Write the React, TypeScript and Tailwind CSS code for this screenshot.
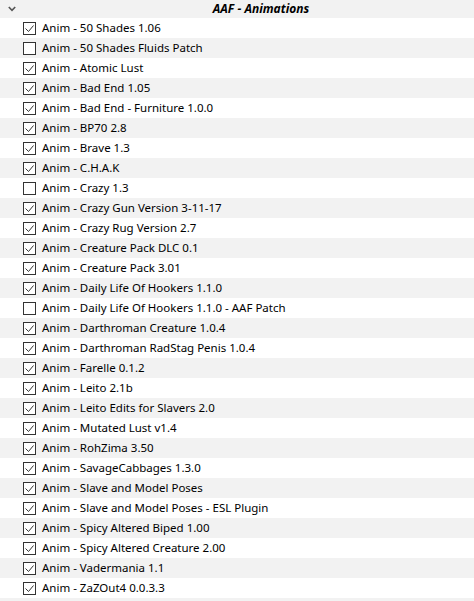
const MODS: [string, boolean][] = [
  ["Anim - 50 Shades 1.06", true],
  ["Anim - 50 Shades Fluids Patch", false],
  ["Anim - Atomic Lust", true],
  ["Anim - Bad End 1.05", true],
  ["Anim - Bad End - Furniture 1.0.0", true],
  ["Anim - BP70 2.8", true],
  ["Anim - Brave 1.3", true],
  ["Anim - C.H.A.K", true],
  ["Anim - Crazy 1.3", false],
  ["Anim - Crazy Gun Version 3-11-17", true],
  ["Anim - Crazy Rug Version 2.7", true],
  ["Anim - Creature Pack DLC 0.1", true],
  ["Anim - Creature Pack 3.01", true],
  ["Anim - Daily Life Of Hookers 1.1.0", true],
  ["Anim - Daily Life Of Hookers 1.1.0 - AAF Patch", false],
  ["Anim - Darthroman Creature 1.0.4", true],
  ["Anim - Darthroman RadStag Penis 1.0.4", true],
  ["Anim - Farelle 0.1.2", true],
  ["Anim - Leito 2.1b", true],
  ["Anim - Leito Edits for Slavers 2.0", true],
  ["Anim - Mutated Lust v1.4", true],
  ["Anim - RohZima 3.50", true],
  ["Anim - SavageCabbages 1.3.0", true],
  ["Anim - Slave and Model Poses", true],
  ["Anim - Slave and Model Poses - ESL Plugin", true],
  ["Anim - Spicy Altered Biped 1.00", true],
  ["Anim - Spicy Altered Creature 2.00", true],
  ["Anim - Vadermania 1.1", true],
  ["Anim - ZaZOut4 0.0.3.3", true],
];

function CheckBox({ checked }: { checked: boolean }) {
  return (
    <div className="w-[13px] h-[13px] border border-[#333333] bg-white flex items-center justify-center shrink-0">
      {checked && (
        <svg width="11" height="11" viewBox="0 0 11 11" fill="none" stroke="#333333" strokeWidth="1">
          <path d="M1.5 5.5 L4.5 8.5 L9.5 2.5" />
        </svg>
      )}
    </div>
  );
}

export default function App() {
  return (
    <div className="w-[474px] h-[601px] bg-[#f2f2f2] overflow-hidden font-['Noto_Sans',sans-serif] text-[11.5px] text-black">
      <div className="h-[18px] flex items-center bg-[#f2f2f2]">
        <div className="w-[50px] pl-[8px] flex items-center">
          <svg width="8" height="6" viewBox="0 0 8 6" fill="none" stroke="#555555" strokeWidth="1.6">
            <path d="M0.8 1 L4 4.4 L7.2 1" />
          </svg>
        </div>
        <div className="flex-1 text-center font-bold italic text-[12px] leading-none pr-[2px]">AAF - Animations</div>
      </div>
      {MODS.map(([name, on], i) => (
        <div
          key={name}
          className={`h-[20px] flex items-center pl-[23px] ${i % 2 === 0 ? "bg-white" : "bg-[#f2f2f2]"}`}
        >
          <CheckBox checked={on} />
          <span className="ml-[6px] leading-none whitespace-nowrap">{name}</span>
        </div>
      ))}
    </div>
  );
}
